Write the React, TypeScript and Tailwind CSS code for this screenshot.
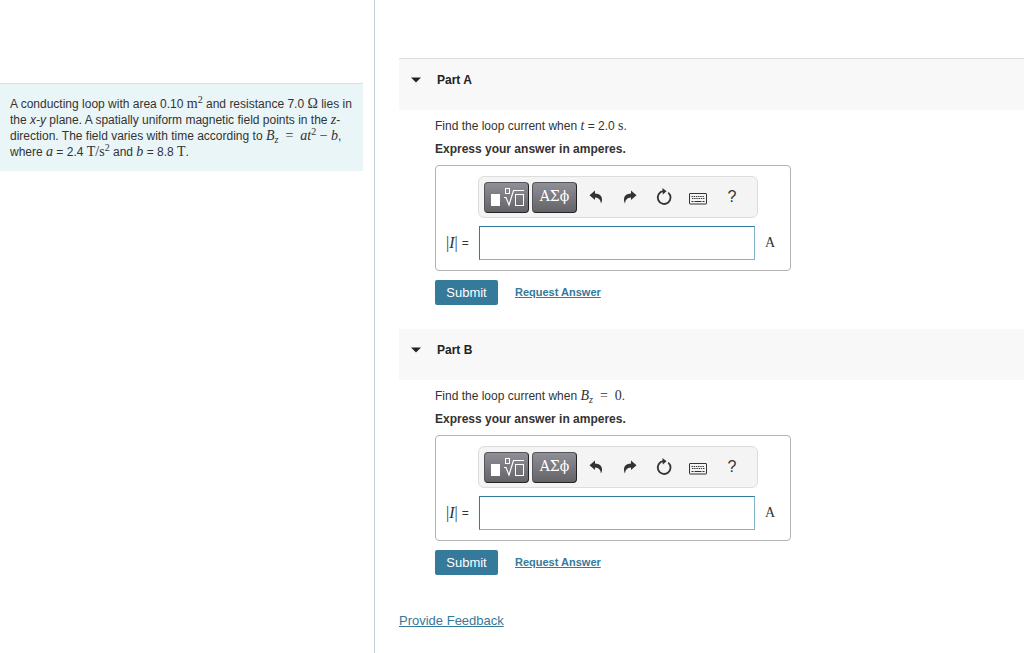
import React from 'react';

interface PartProps {
  id: string;
  title: string;
  first?: boolean;
  children: React.ReactNode;
}

const Tex: React.FC<{ children: React.ReactNode }> = ({ children }) => (
  <span className="font-['Liberation_Serif',serif] text-sm leading-none whitespace-nowrap">{children}</span>
);

const Sup: React.FC<{ children: React.ReactNode }> = ({ children }) => (
  <sup className="text-[10px]">{children}</sup>
);

const TemplatesIcon = () => (
  <svg width="36" height="20" viewBox="0 0 36 20" fill="none" stroke="#fff" aria-hidden="true">
    <rect x="2" y="7" width="9" height="12" fill="#fff" stroke="none" />
    <rect x="16.5" y="1.5" width="4" height="5" />
    <path d="M15 10.5h2l3 7.5L24.5 3.5H35" strokeWidth="1.2" />
    <rect x="26.5" y="7.5" width="8" height="11" />
  </svg>
);

const UndoIcon = () => (
  <svg width="14" height="14" viewBox="0 0 14 14" fill="#333" aria-hidden="true">
    <path d="M0.5 5.2 6 0.6V3.6C10.5 3.8 13 6.2 13 9.4C13 11 12.6 12.4 11.9 13.4C11.8 10.2 10.2 7.6 6 7.4V10Z" />
  </svg>
);

const RedoIcon = () => (
  <svg width="14" height="14" viewBox="0 0 14 14" fill="#333" aria-hidden="true">
    <path d="M13.5 5.2 8 0.6V3.6C3.5 3.8 1 6.2 1 9.4C1 11 1.4 12.4 2.1 13.4C2.2 10.2 3.8 7.6 8 7.4V10Z" />
  </svg>
);

const ResetIcon = () => (
  <svg width="16" height="18" viewBox="0 0 16 18" fill="none" aria-hidden="true">
    <path d="M12.2 4.6A6.4 6.4 0 1 1 7.4 3.2" stroke="#333" strokeWidth="1.8" />
    <path d="M6.4 0 10.6 3.3 6.8 6.6Z" fill="#333" />
  </svg>
);

const KeyboardIcon = () => (
  <svg width="18" height="12" viewBox="0 0 18 12" fill="none" stroke="#333" aria-hidden="true">
    <rect x="0.5" y="0.5" width="17" height="10.5" rx="0.5" />
    <path d="M2.5 3.5h13" strokeDasharray="1.4 0.8" />
    <path d="M3 5.5h12.5" strokeDasharray="1.4 0.8" />
    <path d="M2.5 8.5h2M5.5 8.5h7M13.5 8.5h2" />
  </svg>
);

const darkButton =
  'flex h-[31px] w-[45px] items-center justify-center rounded border border-[#55555b] border-r-[#222] border-b-[#222] bg-linear-to-b from-[#8f8f96] to-[#636368] text-white';
const iconButton = 'flex h-8 w-[34px] items-center justify-center';

const AnswerBox: React.FC<{ id: string }> = ({ id }) => (
  <div className="w-[356px] rounded border border-[#b3b3b3] py-[10px]">
    <div className="ml-[42px] flex h-[42px] w-[280px] items-center rounded-md border border-[#dddddd] bg-[#f4f4f4] pl-[5px]">
      <button type="button" aria-label="Templates" className={darkButton}>
        <TemplatesIcon />
      </button>
      <button
        type="button"
        aria-label="Symbols"
        className={`${darkButton} ml-[3px] pb-[2px] font-['DejaVu_Serif','Liberation_Serif',serif] text-sm`}
      >
        ΑΣϕ
      </button>
      <div className="ml-[2px] flex">
        <button type="button" aria-label="Undo" className={iconButton}><UndoIcon /></button>
        <button type="button" aria-label="Redo" className={iconButton}><RedoIcon /></button>
        <button type="button" aria-label="Reset" className={iconButton}><ResetIcon /></button>
        <button type="button" aria-label="Keyboard shortcuts" className={`${iconButton} pt-[3px]`}><KeyboardIcon /></button>
        <button type="button" aria-label="Help" className={`${iconButton} text-base`}>?</button>
      </div>
    </div>
    <div className="mt-2 flex items-center">
      <label htmlFor={id} className="flex w-[43px] items-center gap-1 pl-[10px] whitespace-nowrap">
        <span className="font-['Liberation_Serif',serif] text-base leading-none">|<i>I</i>|</span>
        <span>=</span>
      </label>
      <input
        id={id}
        type="text"
        className="h-[34px] w-[276px] border border-[#84b3c9] border-t-[#317b9d] border-l-[#317b9d] bg-white px-2 text-sm outline-none"
      />
      <span className="ml-[10px]"><Tex>A</Tex></span>
    </div>
  </div>
);

const Part: React.FC<PartProps> = ({ id, title, first, children }) => (
  <section className="mb-6">
    <h2
      className={`flex items-start bg-[#f8f8f8] pt-3 pb-[21px] pl-3 text-xs font-bold text-[#222] ${
        first ? 'border-t border-[#dddddd]' : ''
      }`}
    >
      <button type="button" className="flex items-center leading-[18px]">
        <svg width="10" height="6" viewBox="0 0 10 6" fill="#222" className="mr-4" aria-hidden="true">
          <path d="M0 0.5h10L5 5.5Z" />
        </svg>
        {title}
      </button>
    </h2>
    <div className="pl-9">
      <p className="mt-2 leading-4">{children}</p>
      <p className="mt-[7px] mb-2 leading-4 font-bold">Express your answer in amperes.</p>
      <AnswerBox id={id} />
      <div className="mt-[9px] flex items-center">
        <button type="button" className="h-[25px] w-[63px] rounded-xs bg-[#35799b] text-[13px] text-white">
          Submit
        </button>
        <a href="#" className="ml-[17px] text-[11px] font-bold text-[#35799b] underline">
          Request Answer
        </a>
      </div>
    </div>
  </section>
);

export default function App() {
  return (
    <div className="flex min-h-screen bg-white font-['Liberation_Sans',Arial,sans-serif] text-xs text-[#333]">
      <aside className="w-[375px] shrink-0 border-r border-[#c3d0da] pt-[83px] pr-[11px]">
        <div className="border-t border-[#dddddd] bg-[#eaf5f7] pt-3 pr-1 pb-[11px] pl-[10px] leading-4">
          A conducting loop with area 0.10 <Tex>m<Sup>2</Sup></Tex> and resistance 7.0 <Tex>Ω</Tex> lies in
          the <i>x-y</i> plane. A spatially uniform magnetic field points in the <Tex><i>z</i></Tex>-
          direction. The field varies with time according to{' '}
          <Tex>
            <i>B</i><sub className="text-[10px]"><i>z</i></sub>&nbsp; =&nbsp; <i>at</i><Sup>2</Sup> − <i>b</i>
          </Tex>
          , where <Tex><i>a</i></Tex> = 2.4 <Tex>T/s<Sup>2</Sup></Tex> and <Tex><i>b</i></Tex> = 8.8 <Tex>T</Tex>.
        </div>
      </aside>
      <main className="min-w-0 flex-1 pt-[58px] pl-6">
        <Part id="answer-a" title="Part A" first>
          Find the loop current when <Tex><i>t</i></Tex> = 2.0 <Tex>s</Tex>.
        </Part>
        <Part id="answer-b" title="Part B">
          Find the loop current when{' '}
          <Tex>
            <i>B</i><sub className="text-[10px]"><i>z</i></sub>&nbsp; =&nbsp; 0
          </Tex>
          .
        </Part>
        <a href="#" className="mt-3 inline-block text-[13px] leading-5 text-[#35799b] underline">
          Provide Feedback
        </a>
      </main>
    </div>
  );
}
